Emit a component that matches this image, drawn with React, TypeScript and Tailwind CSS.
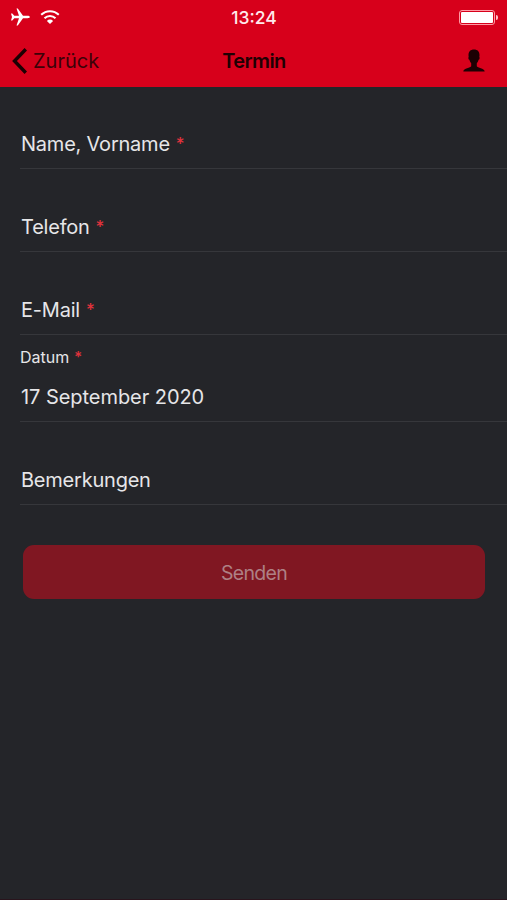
import React from 'react';

type FieldProps = {
  label: string;
  required?: boolean;
};

const Star = ({ className = '' }: { className?: string }) => (
  <span className={`text-[#e0323c] ${className}`}>*</span>
);

function Field({ label, required }: FieldProps) {
  return (
    <div className="ml-5 flex h-[83px] items-end gap-[6px] border-b border-[#36373b] pb-[11px] pl-px text-[20px] leading-[26px] tracking-[-0.22px] text-[#e6e6e8]">
      <span className="whitespace-nowrap">{label}</span>
      {required && <Star className="text-[17px] font-medium" />}
    </div>
  );
}

function StatusBar() {
  return (
    <div className="grid h-[34px] grid-cols-3 items-center pl-[10px] pr-[9px] text-white">
      <div className="flex items-center gap-[9px]">
        <svg className="h-[18px] w-[20px]" viewBox="0 0 20 18" fill="currentColor">
          <path d="M19.8 9c0-.8-1-1.200-2.300-1.200H13L7.800.600H6.500L9 7.700H4.300L2.300 5.500H1L2 9l-1 3.500h1.300l2-2.200H9L6.500 17.400h1.300L13 10.200h4.500c1.300 0 2.300-.4 2.300-1.200z" />
        </svg>
        <svg className="h-[16px] w-[22px]" viewBox="0 0 22 16" fill="none" stroke="currentColor" strokeWidth="2">
          <path d="M2.200 5.800a12.400 12.400 0 0 1 17.600 0M5.500 9.200a7.800 7.800 0 0 1 11 0" />
          <path d="M7.900 11.900a4.400 4.400 0 0 1 6.200 0L11 15z" fill="currentColor" stroke="none" />
        </svg>
      </div>
      <div className="pt-px text-center text-[17.500px] font-medium leading-5 text-[#ffe9eb]">13:24</div>
      <div className="flex items-center justify-end">
        <div className="h-[15px] w-[36px] rounded-[3px] border border-[#ff9aa4] p-px">
          <div className="h-full rounded-[1px] bg-white" />
        </div>
        <div className="ml-px h-[5px] w-[2px] rounded-r-full bg-[#ffc2c8]" />
      </div>
    </div>
  );
}

function NavBar() {
  return (
    <div className="grid h-[53px] grid-cols-[1fr_auto_1fr] items-center pl-3 pr-[22px]">
      <div className="flex items-center gap-[6px] text-[20px] text-[#3c0208]">
        <svg className="h-[26px] w-[15px]" viewBox="0 0 15 26" fill="none" stroke="#1c0003" strokeWidth="3.400">
          <path d="M13.800 1.300 2.500 13l11.300 11.700" />
        </svg>
        <span>Zurück</span>
      </div>
      <div className="pl-[11px] text-center text-[20px] font-semibold tracking-[-0.6px] text-[#1f0003]">Termin</div>
      <svg className="h-[23px] w-[22px] justify-self-end" viewBox="0 0 22 23" fill="#1c0003">
        <path d="M11 .500C7.400.500 5.500 2.600 5.500 6c0 .7.100 1.300.2 1.900-.7.500-.3 2.600.7 2.900.4 1.600 1 2.700 1.800 3.500v3C7.700 19.200.600 18.900.300 22.500h21.400c-.3-3.600-7.400-3.300-7.900-5.200v-3c.8-.8 1.400-1.900 1.800-3.500 1-.3 1.400-2.400.7-2.900.1-.6.2-1.200.2-1.900 0-3.400-1.900-5.500-5.500-5.500z" />
      </svg>
    </div>
  );
}

export default function App() {
  return (
    <div className="flex h-[900px] w-full flex-col overflow-hidden border-b border-[#29141c] bg-[#242529] font-['Inter','Liberation_Sans',sans-serif]">
      <header className="h-[87px] shrink-0 bg-[#d7001b]">
        <StatusBar />
        <NavBar />
      </header>
      <main className="-mt-px flex flex-col">
        <Field label="Name, Vorname" required />
        <Field label="Telefon" required />
        <Field label="E-Mail" required />
        <div className="ml-5 flex h-[87px] flex-col border-b border-[#36373b] pt-[11px] text-[#e6e6e8]">
          <div className="flex gap-[5px] text-[16px] leading-[22px]">
            <span>Datum</span>
            <Star className="text-[15px] font-medium" />
          </div>
          <div className="mt-4 pl-px text-[20px] leading-[26px] tracking-[-0.05px]">17 September 2020</div>
        </div>
        <Field label="Bemerkungen" />
        <button className="ml-[23px] mr-[22px] mt-10 h-[54px] rounded-[11px] bg-[#801722] pt-[3px] text-[19.500px] tracking-[-0.7px] text-[#ae8085]">
          Senden
        </button>
      </main>
    </div>
  );
}
